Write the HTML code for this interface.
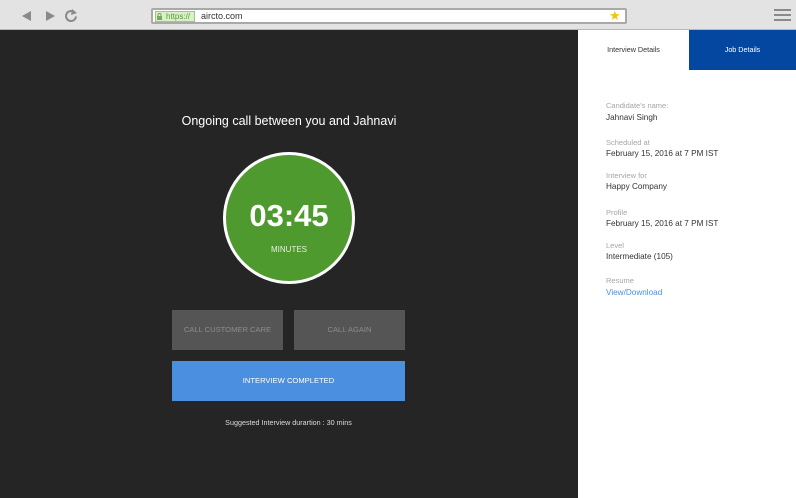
<!DOCTYPE html>
<html><head><style>
*{margin:0;padding:0;box-sizing:border-box}
body{width:796px;height:498px;overflow:hidden;font-family:"Liberation Sans",sans-serif;background:#252525;position:relative}
.chrome{position:absolute;left:0;top:0;width:796px;height:30px;background:#e3e3e3;border-bottom:1px solid #b8b8b8}
.url{position:absolute;left:151px;top:8px;width:476px;height:16px;background:#fff;border:2px solid #a9a9a9;border-radius:2px}
.https{position:absolute;left:2px;top:1px;width:40px;height:11px;background:#d9f0c8;border:1px solid #9bc884;font-size:8px;color:#5a9a3a;line-height:9px;padding-left:10px}
.abs{position:absolute}
.side{position:absolute;left:578px;top:30px;width:218px;height:468px;background:#fff}
.lbl{position:absolute;left:28px;font-size:7.5px;color:#a5a5a5}
.val{position:absolute;left:28px;font-size:8.2px;color:#333}
.btn{position:absolute;background:#555;color:#8c8c8c;font-size:7.6px;text-align:center;line-height:40px;height:40px}
</style></head><body>
<div class="chrome">
<svg class="abs" style="left:18px;top:8px" width="64" height="16"><path d="M4 8 L13 3 L13 13Z" fill="#8a8a8a"/><path d="M28 3 L37 8 L28 13Z" fill="#8a8a8a"/><path d="M58 8.5 A5 5 0 1 1 56 4" stroke="#8a8a8a" stroke-width="2" fill="none"/><path d="M54 1 L59 5 L53 7Z" fill="#8a8a8a"/></svg>
<div class="url"><div class="https">https://</div><svg class="abs" style="left:4px;top:3px" width="6" height="7"><rect x="0" y="3" width="5" height="4" fill="#7aa860"/><path d="M1 3V2a1.5 1.5 0 0 1 3 0v1" stroke="#7aa860" fill="none"/></svg>
<span class="abs" style="left:48px;top:1px;font-size:9px;color:#333">aircto.com</span>
<span class="abs" style="left:456px;top:-2px;font-size:13px;color:#f2c500">★</span></div>
<div class="abs" style="left:774px;top:9px;width:17px;height:2px;background:#8a8a8a;box-shadow:0 5px 0 #8a8a8a,0 10px 0 #8a8a8a"></div>
</div>
<div class="abs" style="left:0;top:114px;width:578px;text-align:center;color:#fff;font-size:12.5px">Ongoing call between you and Jahnavi</div>
<div class="abs" style="left:223px;top:152px;width:132px;height:132px;border-radius:50%;background:#4e9a2e;border:3px solid #fff"></div>
<div class="abs" style="left:223px;top:198px;width:132px;text-align:center;color:#fff;font-size:31px;font-weight:bold">03:45</div>
<div class="abs" style="left:223px;top:245px;width:132px;text-align:center;color:#e6f0e0;font-size:8px">MINUTES</div>
<div class="btn" style="left:172px;top:310px;width:111px">CALL CUSTOMER CARE</div>
<div class="btn" style="left:294px;top:310px;width:111px">CALL AGAIN</div>
<div class="btn" style="left:172px;top:361px;width:233px;background:#4a8fe0;color:#fff">INTERVIEW COMPLETED</div>
<div class="abs" style="left:172px;top:418px;width:233px;text-align:center;color:#ddd;font-size:7.2px">Suggested Interview durartion : 30 mins</div>
<div class="side">
<div class="abs" style="left:0;top:0;width:111px;height:40px;text-align:center;line-height:40px;font-size:7.2px;color:#333">Interview Details</div>
<div class="abs" style="left:111px;top:0;width:107px;height:40px;background:#0447a0;text-align:center;line-height:40px;font-size:7.2px;color:#fff">Job Details</div>
<div class="lbl" style="top:71px">Candidate's name:</div><div class="val" style="top:83px">Jahnavi Singh</div>
<div class="lbl" style="top:108px">Scheduled at</div><div class="val" style="top:119px">February 15, 2016 at 7 PM IST</div>
<div class="lbl" style="top:141px">Interview for</div><div class="val" style="top:152px">Happy Company</div>
<div class="lbl" style="top:178px">Profile</div><div class="val" style="top:189px">February 15, 2016 at 7 PM IST</div>
<div class="lbl" style="top:211px">Level</div><div class="val" style="top:222px">Intermediate (105)</div>
<div class="lbl" style="top:246px">Resume</div><div class="val" style="top:258px;color:#4a90e2">View/Download</div>
</div>
</body></html>
